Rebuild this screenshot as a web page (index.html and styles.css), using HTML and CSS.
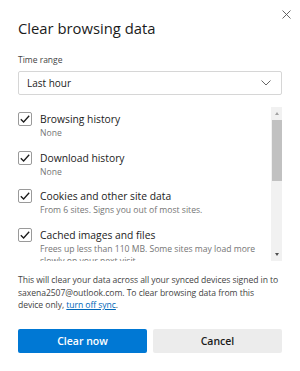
FILE: index.html
```html
<!DOCTYPE html>
<html lang="en">
<head>
  <meta charset="UTF-8">
  <title>Clear browsing data</title>
  <link rel="stylesheet" href="styles.css">
</head>
<body>
  <div class="dialog">
    <div class="header">
      <h1 class="title">Clear browsing data</h1>
      <button class="close" aria-label="Close">
        <svg width="9" height="9" viewBox="0 0 9 9"><path d="M0.5 0.5L8.5 8.5M8.5 0.5L0.5 8.5" stroke="#555" stroke-width="0.9" fill="none"/></svg>
      </button>
    </div>

    <div class="field-label">Time range</div>
    <div class="select">
      <span>Last hour</span>
      <svg width="10" height="6" viewBox="0 0 10 6"><path d="M0.5 0.5L5 5L9.5 0.5" stroke="#555" stroke-width="0.9" fill="none"/></svg>
    </div>

    <div class="list-wrap">
      <div class="list">
        <div class="item">
          <span class="check"><svg width="10" height="8" viewBox="0 0 10 8"><path d="M0.8 4.2L3.6 7L9.2 0.8" stroke="#1b1b1b" stroke-width="1.3" fill="none"/></svg></span>
          <div class="item-text">
            <div class="item-title">Browsing history</div>
            <div class="item-desc">None</div>
          </div>
        </div>
        <div class="item">
          <span class="check"><svg width="10" height="8" viewBox="0 0 10 8"><path d="M0.8 4.2L3.6 7L9.2 0.8" stroke="#1b1b1b" stroke-width="1.3" fill="none"/></svg></span>
          <div class="item-text">
            <div class="item-title">Download history</div>
            <div class="item-desc">None</div>
          </div>
        </div>
        <div class="item">
          <span class="check"><svg width="10" height="8" viewBox="0 0 10 8"><path d="M0.8 4.2L3.6 7L9.2 0.8" stroke="#1b1b1b" stroke-width="1.3" fill="none"/></svg></span>
          <div class="item-text">
            <div class="item-title">Cookies and other site data</div>
            <div class="item-desc">From 6 sites. Signs you out of most sites.</div>
          </div>
        </div>
        <div class="item">
          <span class="check"><svg width="10" height="8" viewBox="0 0 10 8"><path d="M0.8 4.2L3.6 7L9.2 0.8" stroke="#1b1b1b" stroke-width="1.3" fill="none"/></svg></span>
          <div class="item-text">
            <div class="item-title">Cached images and files</div>
            <div class="item-desc">Frees up less than 110 MB. Some sites may load more slowly on your next visit.</div>
          </div>
        </div>
      </div>
      <div class="scrollbar">
        <span class="arrow up"></span>
        <div class="thumb"></div>
        <span class="arrow down"></span>
      </div>
    </div>

    <p class="note">This will clear your data across all your synced devices signed in to saxena2507@outlook.com. To clear browsing data from this<br>device only, <a href="#">turn off sync</a>.</p>

    <div class="actions">
      <button class="btn primary">Clear now</button>
      <button class="btn">Cancel</button>
    </div>
  </div>
</body>
</html>
```

FILE: styles.css
```css
body {
  margin: 0;
  background-color: #ffffff;
  font-family: 'Open Sans', 'Noto Sans', sans-serif;
  color: #1b1b1b;
}

.dialog {
  width: 300px;
  height: 371px;
  box-sizing: border-box;
  padding: 0 18px;
  overflow: hidden;
}

.header {
  display: flex;
  justify-content: space-between;
  align-items: flex-start;
  padding-top: 10px;
}

.title {
  margin: 8px 0 0;
  font-size: 14.8px;
  font-weight: 400;
  line-height: 20px;
}

.close {
  border: none;
  background: none;
  padding: 0;
  margin-right: -9px;
  width: 9px;
  height: 9px;
  display: flex;
}

.field-label {
  margin-top: 16px;
  font-size: 8.5px;
  line-height: 12px;
  color: #444;
}

.select {
  margin-top: 5px;
  height: 24px;
  box-sizing: border-box;
  border: 1px solid #d6d6d6;
  border-radius: 2px;
  display: flex;
  align-items: center;
  justify-content: space-between;
  padding: 0 10px 0 8px;
  font-size: 10px;
  color: #1b1b1b;
}

.list-wrap {
  display: flex;
  margin-top: 12px;
  height: 154px;
}

.list {
  flex: 1;
  overflow: hidden;
  padding-top: 4px;
}

.item {
  display: flex;
  gap: 8px;
  margin-bottom: 10px;
}

.check {
  flex: none;
  width: 14px;
  height: 14px;
  box-sizing: border-box;
  border: 1px solid #9a9a9a;
  border-radius: 2px;
  display: flex;
  align-items: center;
  justify-content: center;
  margin-top: 1px;
}

.item-title {
  font-size: 10.3px;
  line-height: 16px;
}

.item-desc {
  font-size: 8.6px;
  line-height: 12.5px;
  color: #757575;
  padding-right: 12px;
}

.scrollbar {
  flex: none;
  width: 11px;
  background-color: #f1f1f1;
  display: flex;
  flex-direction: column;
  align-items: center;
}

.arrow {
  width: 0;
  height: 0;
  border-left: 2.5px solid transparent;
  border-right: 2.5px solid transparent;
  margin: 5px 0;
}

.arrow.up {
  border-bottom: 3px solid #a3a3a3;
}

.arrow.down {
  border-top: 3px solid #505050;
  margin-top: auto;
}

.thumb {
  width: 10px;
  height: 61px;
  background-color: #c1c1c1;
}

.note {
  margin: 13px 0 0;
  font-size: 8.6px;
  line-height: 12.5px;
  letter-spacing: -0.06px;
  color: #444;
}

.note a {
  color: #0067b8;
  text-decoration: underline;
}

.actions {
  display: flex;
  gap: 6px;
  margin-top: 17px;
}

.btn {
  flex: 1;
  height: 24px;
  border: none;
  border-radius: 2px;
  background-color: #ececec;
  color: #1b1b1b;
  font-family: inherit;
  font-size: 10.5px;
  font-weight: 600;
}

.btn.primary {
  background-color: #0078d4;
  color: #ffffff;
}
```
